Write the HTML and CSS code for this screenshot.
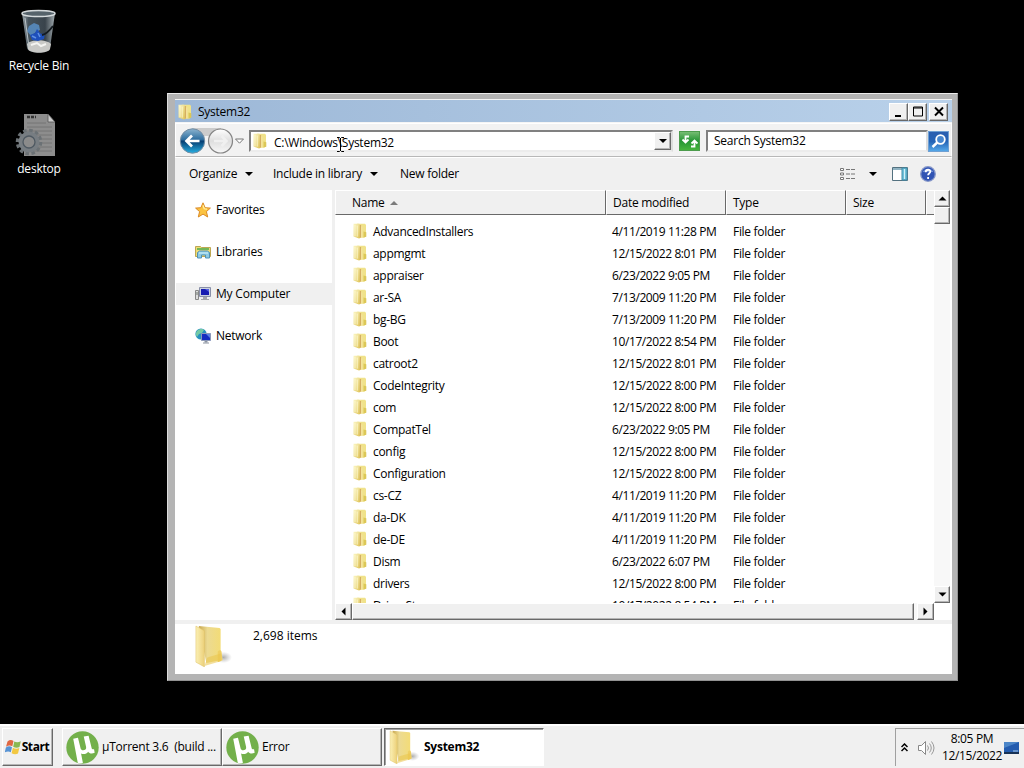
FILE: index.html
```html
<!DOCTYPE html>
<html lang="en">
<head>
  <meta charset="utf-8">
  <meta name="viewport" content="width=device-width, initial-scale=1">
  <title>System32</title>
  <link rel="stylesheet" href="styles.css">
</head>
<body>
  <svg class="sprite" width="0" height="0">
    <defs>
      <linearGradient id="gFolder" x1="0" y1="0" x2="1" y2="1">
        <stop offset="0" stop-color="#fbf6c4"/><stop offset="1" stop-color="#dfc458"/>
      </linearGradient>
      <linearGradient id="gFlap" x1="0" y1="0" x2="1" y2="0">
        <stop offset="0" stop-color="#fbf0b4"/><stop offset="1" stop-color="#ecd07a"/>
      </linearGradient>
      <linearGradient id="gBack" x1="0" y1="0" x2="1" y2="0">
        <stop offset="0" stop-color="#c9a851"/><stop offset=".4" stop-color="#ecda92"/><stop offset="1" stop-color="#f3dc77"/>
      </linearGradient>
      <radialGradient id="gShadow">
        <stop offset="0" stop-color="#777" stop-opacity=".6"/><stop offset="1" stop-color="#999" stop-opacity="0"/>
      </radialGradient>
      <symbol id="folder" viewBox="0 0 16 16">
        <path d="M5 .8h8l1 1v11.6l-2 1.3H5z" fill="#f0e28a"/>
        <path d="M1.500 .8h5.500l1.200 1.300V15L7 15.6 1.500 13.600z" fill="url(#gFolder)"/>
        <path d="M8.400 2v12.600" stroke="#d5ae62" stroke-width="1.300"/>
        <path d="M9.800 3.500v10.800" stroke="#f5e4a4" stroke-width="1"/>
        <path d="M11.500 8.600l2.800.6v4.600l-2.800.8z" fill="#dcc757"/>
        <path d="M3 2v11.200M5.200 2.600v11" stroke="#fffbd8" stroke-width=".8"/>
      </symbol>
      <symbol id="folder-big" viewBox="0 0 40 44">
        <ellipse cx="31" cy="34" rx="9" ry="6" fill="url(#gShadow)"/>
        <path d="M5 1l22 2 1 1v33l-15 3z" fill="url(#gBack)"/>
        <path d="M25 28q3-3 4 0l1 9-5 2z" fill="#efcf62"/>
        <path d="M14 34l14-4v8l-17 5z" fill="#e9c44b" opacity=".55"/>
        <path d="M2 1l9 5v38l-9-5z" fill="url(#gFlap)" stroke="#dcbf63" stroke-width=".5"/>
      </symbol>
      <symbol id="utorrent" viewBox="0 0 32 32">
        <circle cx="16" cy="16" r="15.7" fill="#73b04b"/>
        <path d="M7 7.5l4.6-1 2.6 10.4c.7 2.9 6.1 2 5.3-1.5L17.200 5.400l4.700-.9 3 12.200c.3 1.100 1.200 1.300 2.300.9l.6 3.400c-2.600 1.300-5.200.9-6.300-1-1.400 2.200-4.500 2.900-6.900 1.700L16.400 31c-1.700.5-3.400.2-5-.3z" fill="#fff"/>
      </symbol>
    </defs>
  </svg>

  <main class="desktop">
    <div class="shortcut recycle">
      <svg width="38" height="46" viewBox="0 0 38 46">
        <defs>
          <linearGradient id="gBin" x1="0" x2="1">
            <stop offset="0" stop-color="#9aa4a9"/><stop offset=".2" stop-color="#46535c"/><stop offset=".7" stop-color="#39434b"/><stop offset="1" stop-color="#a3acb0"/>
          </linearGradient>
        </defs>
        <path d="M2 4l5 35c1 6 22 6 23 0l5-35z" fill="url(#gBin)"/>
        <path d="M7 35c4-5 19-5 24 0l-1 5c-2 5-20 5-22 0z" fill="#c9c9c6"/>
        <path d="M9 17l5-3 5 2 1 5-4 2-5 4-4-5z" fill="#5585b4"/>
        <path d="M10 26l5-2 2-4 4 5 4-1-1 6-6 2-6-1z" fill="#1e4fba"/>
        <path d="M12 27l4 2M18 24l2 4" stroke="#5f90e4" stroke-width="1.500"/>
        <path d="M22 26c5-1 8-5 11-9" stroke="#151b20" stroke-width="2" fill="none"/>
        <path d="M11 36l6-2 4 3 5-2" stroke="#f4f4f1" stroke-width="2" fill="none"/>
        <ellipse cx="18.500" cy="4.500" rx="16.500" ry="3" fill="#56636b" stroke="#d5dadc" stroke-width="1.500"/>
        <path d="M5 9l4 29" stroke="#b9c2c7" stroke-width="1"/>
      </svg>
      <span>Recycle Bin</span>
    </div>
    <div class="shortcut">
      <svg width="42" height="46" viewBox="0 0 42 46">
        <path d="M9 2h24l7 8v34H9z" fill="#8d8d8d"/>
        <path d="M33 2v8h7z" fill="#cacaca" stroke="#555" stroke-width=".8"/>
        <path d="M12 5h9" stroke="#333" stroke-width="2.500" stroke-dasharray="3 1"/>
        <path d="M12 11h19M12 15h25M12 19h25M12 23h25M12 27h25M12 31h25M12 35h25M12 39h25" stroke="#747474" stroke-width="1"/>
        <circle cx="14" cy="30" r="11.500" fill="none" stroke="#6b7175" stroke-width="3.500" stroke-dasharray="3.500 2.500"/>
        <circle cx="14" cy="30" r="8" fill="#858789" stroke="#777d82" stroke-width="5"/>
        <circle cx="14" cy="30" r="6" fill="#8b8b8b" stroke="#4f5962" stroke-width="1.300"/>
      </svg>
      <span>desktop</span>
    </div>

    <section class="window">
      <header class="titlebar">
        <svg class="icon"><use href="#folder"/></svg>
        <span class="title">System32</span>
        <button class="caption-btn"><svg width="16" height="15"><path d="M4 12h6" stroke="#000" stroke-width="2"/></svg></button>
        <button class="caption-btn"><svg width="16" height="15"><path d="M3.500 3h9v9h-9zM3.500 4h9" fill="none" stroke="#000"/></svg></button>
        <button class="caption-btn close"><svg width="16" height="15"><path d="M4 3.500l8 8M12 3.500l-8 8" stroke="#000" stroke-width="1.900"/></svg></button>
      </header>

      <div class="addressbar">
        <svg class="nav-buttons" width="68" height="30" viewBox="0 0 68 30">
          <defs>
            <linearGradient id="gNav" x1="0" y1="0" x2="0" y2="1">
              <stop offset="0" stop-color="#8bb3cf"/><stop offset=".46" stop-color="#2a6b9d"/><stop offset=".5" stop-color="#063c70"/><stop offset="1" stop-color="#27b0e3"/>
            </linearGradient>
            <linearGradient id="gFwd" x1="0" y1="0" x2="0" y2="1">
              <stop offset="0" stop-color="#fff"/><stop offset=".5" stop-color="#dedede"/><stop offset="1" stop-color="#f8f8f8"/>
            </linearGradient>
          </defs>
          <path d="M15 2h29v8H15z" fill="#ccc"/>
          <circle cx="15.500" cy="15" r="12.200" fill="url(#gNav)" stroke="#748da3"/>
          <path d="M22.500 15H10M15 9.500L9.500 15l5.500 5.500" fill="none" stroke="#fff" stroke-width="2.700"/>
          <circle cx="43.500" cy="15" r="12" fill="url(#gFwd)" stroke="#858585" stroke-width="1.200"/>
          <path d="M37 15h12M44.500 10l5 5-5 5" fill="none" stroke="#f0f0f0" stroke-width="2.500"/>
          <path d="M58.500 13h8l-4 4.200z" fill="#fff" stroke="#777"/>
        </svg>
        <div class="field path">
          <svg class="icon"><use href="#folder"/></svg>
          <span>C:\Windows\System32</span>
          <button class="drop"><svg width="10" height="6"><path d="M1 1h8L5 5z"/></svg></button>
        </div>
        <button class="refresh">
          <svg width="20" height="19" viewBox="0 0 20 19"><path d="M9 4.500H5.500v5M2.500 7.500l3 3 3-3M11 14.500h3.500v-5M11.500 11.500l3-3 3 3" fill="none" stroke="#fff" stroke-width="1.800"/></svg>
        </button>
        <div class="field search"><span>Search System32</span></div>
        <button class="search-btn">
          <svg width="20" height="19" viewBox="0 0 20 19"><circle cx="11.500" cy="7.500" r="4.300" fill="#4787cf" stroke="#fff" stroke-width="1.800"/><path d="M8.300 10.500L3.500 15" stroke="#fff" stroke-width="2.400"/></svg>
        </button>
        <svg class="ibeam" width="9" height="17"><path d="M1 1.500h2.500l1 1 1-1H8M4.500 2v13M1 15.500h2.500l1-1 1 1H8" fill="none" stroke="#000"/></svg>
      </div>

      <nav class="toolbar">
        <span class="organize">Organize</span><i class="caret"></i>
        <span class="include">Include in library</span><i class="caret"></i>
        <span class="new">New folder</span>
        <svg class="views" width="16" height="14"><path d="M.5 1.500h3v2h-3zM.5 6h3v2h-3zM.5 10.500h3v2h-3z" fill="#fff" stroke="#777"/><path d="M6 2.500h10M6 7h10M6 11.500h10" stroke="#777" stroke-dasharray="4 1"/></svg>
        <i class="caret"></i>
        <svg class="preview" width="16" height="14"><path d="M.5.5h15v13H.5z" fill="#fff" stroke="#53717f"/><path d="M1 2h9" stroke="#90b3c2" stroke-width="2"/><path d="M10 1h5v12h-5z" fill="#6fc2da" stroke="#418ca9"/><path d="M12.500 2v10" stroke="#d2f0f8"/></svg>
        <svg class="help" width="16" height="16"><circle cx="8" cy="8" r="7.300" fill="#3154b4" stroke="#8798c9" stroke-width="1.300"/><path d="M2.500 6a6 5 0 0 1 11 0z" fill="#7190d6"/><path d="M5.700 6.200c0-3.300 4.800-3.100 4.600-.4-.1 1.500-2.200 1.500-2.200 3.500M8.100 11v2" fill="none" stroke="#fff" stroke-width="1.800"/></svg>
      </nav>

      <div class="content">
        <aside class="nav-pane">
          <div class="nav-item">
            <svg width="16" height="16"><path d="M8 .8l2.100 4.900 5.300.4-4 3.500 1.300 5.400L8 12.100 3.300 15l1.300-5.400-4-3.500 5.300-.4z" fill="#fbc341" stroke="#db8a25"/><path d="M8 3.200l1.200 3.600 2.800.3" fill="none" stroke="#fff1a6" stroke-width="1.200"/></svg>
            Favorites
          </div>
          <div class="nav-item">
            <svg width="16" height="16"><path d="M.5 2.500h5l1 1h9v9H.5z" fill="#eedc76" stroke="#bda752"/><path d="M2 5h12" stroke="#73b759" stroke-width="2"/><path d="M2.500 14V8.500l2-1.500h8l2 1.500V14h-4v-3h-4v3z" fill="#8ccae4" stroke="#5392b4"/><path d="M4 9h9" stroke="#d5f4fc"/></svg>
            Libraries
          </div>
          <div class="nav-item selected">
            <svg width="16" height="16"><path d="M.5 4.500h3v9h-3z" fill="#ddd" stroke="#888"/><path d="M2 6v3" stroke="#6b746c"/><path d="M4.500 1.500h11v9h-11z" fill="#cbd1df" stroke="#888fa8"/><path d="M6 3h8v6H6z" fill="#171cb1"/><path d="M10 3h4v3z" fill="#5562df"/><path d="M8 11h4v2h2v1H6v-1h2z" fill="#a5a6ab"/></svg>
            My Computer
          </div>
          <div class="nav-item">
            <svg width="16" height="16"><circle cx="6" cy="6" r="5.600" fill="#2691bf"/><path d="M2 3c3-3 6-2 7-1L7 5 4 6 2 9C.5 7 .5 5 2 3z" fill="#74c9a5"/><path d="M6.500 5.500h9v7h-9z" fill="#162dc0" stroke="#8b98b8"/><path d="M11 6h4v4z" fill="#5d82e3"/><path d="M9.500 13h3v1.500h-3z" fill="#8b93a0"/><path d="M8 15h6" stroke="#8b93a0"/></svg>
            Network
          </div>
        </aside>

        <div class="list-pane">
          <div class="list-view">
            <div class="columns">
              <div class="col">Name <i class="sort"></i></div>
              <div class="col">Date modified</div>
              <div class="col">Type</div>
              <div class="col">Size</div>
              <div class="col"></div>
            </div>
            <div class="rows">
              <div class="row"><svg class="icon"><use href="#folder"/></svg><span>AdvancedInstallers</span><span class="date">4/11/2019 11:28 PM</span><span>File folder</span></div>
              <div class="row"><svg class="icon"><use href="#folder"/></svg><span>appmgmt</span><span class="date">12/15/2022 8:01 PM</span><span>File folder</span></div>
              <div class="row"><svg class="icon"><use href="#folder"/></svg><span>appraiser</span><span class="date">6/23/2022 9:05 PM</span><span>File folder</span></div>
              <div class="row"><svg class="icon"><use href="#folder"/></svg><span>ar-SA</span><span class="date">7/13/2009 11:20 PM</span><span>File folder</span></div>
              <div class="row"><svg class="icon"><use href="#folder"/></svg><span>bg-BG</span><span class="date">7/13/2009 11:20 PM</span><span>File folder</span></div>
              <div class="row"><svg class="icon"><use href="#folder"/></svg><span>Boot</span><span class="date">10/17/2022 8:54 PM</span><span>File folder</span></div>
              <div class="row"><svg class="icon"><use href="#folder"/></svg><span>catroot2</span><span class="date">12/15/2022 8:01 PM</span><span>File folder</span></div>
              <div class="row"><svg class="icon"><use href="#folder"/></svg><span>CodeIntegrity</span><span class="date">12/15/2022 8:00 PM</span><span>File folder</span></div>
              <div class="row"><svg class="icon"><use href="#folder"/></svg><span>com</span><span class="date">12/15/2022 8:00 PM</span><span>File folder</span></div>
              <div class="row"><svg class="icon"><use href="#folder"/></svg><span>CompatTel</span><span class="date">6/23/2022 9:05 PM</span><span>File folder</span></div>
              <div class="row"><svg class="icon"><use href="#folder"/></svg><span>config</span><span class="date">12/15/2022 8:00 PM</span><span>File folder</span></div>
              <div class="row"><svg class="icon"><use href="#folder"/></svg><span>Configuration</span><span class="date">12/15/2022 8:00 PM</span><span>File folder</span></div>
              <div class="row"><svg class="icon"><use href="#folder"/></svg><span>cs-CZ</span><span class="date">4/11/2019 11:20 PM</span><span>File folder</span></div>
              <div class="row"><svg class="icon"><use href="#folder"/></svg><span>da-DK</span><span class="date">4/11/2019 11:20 PM</span><span>File folder</span></div>
              <div class="row"><svg class="icon"><use href="#folder"/></svg><span>de-DE</span><span class="date">4/11/2019 11:20 PM</span><span>File folder</span></div>
              <div class="row"><svg class="icon"><use href="#folder"/></svg><span>Dism</span><span class="date">6/23/2022 6:07 PM</span><span>File folder</span></div>
              <div class="row"><svg class="icon"><use href="#folder"/></svg><span>drivers</span><span class="date">12/15/2022 8:00 PM</span><span>File folder</span></div>
              <div class="row"><svg class="icon"><use href="#folder"/></svg><span>DriverStore</span><span class="date">10/17/2022 8:54 PM</span><span>File folder</span></div>
            </div>
          </div>
          <div class="vscroll">
            <button><svg width="9" height="5"><path d="M.5 4.500h8l-4-4z"/></svg></button>
            <div class="thumb"></div>
            <div class="track"></div>
            <button><svg width="9" height="5"><path d="M.5.5h8l-4 4z"/></svg></button>
          </div>
          <div class="hscroll">
            <button><svg width="5" height="9"><path d="M4.500.5v8l-4-4z"/></svg></button>
            <div class="thumb"></div>
            <div class="track"></div>
            <button><svg width="5" height="9"><path d="M.5.5v8l4-4z"/></svg></button>
          </div>
        </div>
      </div>

      <footer class="details">
        <svg width="38" height="42"><use href="#folder-big"/></svg>
        <span>2,698 items</span>
      </footer>
    </section>
  </main>

  <div class="taskbar">
    <button class="start">
      <svg width="17" height="16" viewBox="0 0 17 16"><path d="M2.500 2.500Q5.500 0 8.500 2L7.300 7.300Q4.500 5.500 1 7.800z" fill="#df6742"/><path d="M9.300 2.500q3 1.700 6.500-.3L14.500 8q-3.200 1.500-6.300-.3z" fill="#8ab852"/><path d="M.9 8.500Q4 6.300 7 8.200L5.800 13.300Q3 11.600-.3 13.500z" fill="#5793d4"/><path d="M7.900 8.700q3.200 1.700 6.400.3L13 14.600q-3.200 1.500-6.400-.4z" fill="#f2c842"/></svg>
      Start
    </button>
    <button class="task"><svg width="33" height="33"><use href="#utorrent"/></svg>µTorrent 3.6 &nbsp;(build ...</button>
    <button class="task"><svg width="33" height="33"><use href="#utorrent"/></svg>Error</button>
    <button class="task active"><svg width="32" height="34"><use href="#folder-big"/></svg>System32</button>
    <div class="tray">
      <svg width="7" height="9"><path d="M.5 4L3.500 1l3 3M.5 8l3-3 3 3" fill="none" stroke="#000" stroke-width="1.500"/></svg>
      <svg class="volume" width="17" height="16"><path d="M.5 5.500h3l4-4v13l-4-4h-3z" fill="#fff" stroke="#888"/><path d="M9.500 5.500q2 2.500 0 5M11.500 3.500q3.500 4.500 0 9M13.500 1.500q5 6.500 0 13" fill="none" stroke="#999"/></svg>
      <div class="clock"><span>8:05 PM</span><span>12/15/2022</span></div>
      <svg class="show-desktop" width="16" height="14"><path d="M0 1h15v11H0z" fill="#245caf"/><path d="M0 1h15L0 7z" fill="#4c86c8"/><path d="M0 12h15" stroke="#183256" stroke-width="2"/><path d="M9 10h5" stroke="#a9cae9"/></svg>
    </div>
  </div>
</body>
</html>
```
FILE: styles.css
```css
* {
  box-sizing: border-box;
}

body {
  margin: 0;
  width: 1024px;
  height: 768px;
  display: flex;
  flex-direction: column;
  overflow: hidden;
  background: #000;
  color: #000;
  font-family: "Open Sans", "Noto Sans", sans-serif;
  font-size: 12px;
  line-height: 16px;
  letter-spacing: -0.25px;
  white-space: nowrap;
}

button {
  display: flex;
  align-items: center;
  justify-content: center;
  flex-shrink: 0;
  margin: 0;
  padding: 0;
  border: 1px solid;
  border-color: #fff #696969 #696969 #fff;
  box-shadow: inset -1px -1px #b5b5b5;
  background: #f0f0f0;
  color: #000;
  font: inherit;
  letter-spacing: inherit;
}

svg {
  display: block;
  flex-shrink: 0;
}

.sprite {
  position: absolute;
}

.icon {
  width: 16px;
  height: 16px;
}

/* Desktop */
.desktop {
  position: relative;
  height: 724px;
}

.shortcut {
  width: 78px;
  height: 103px;
  padding-top: 9px;
  display: flex;
  flex-direction: column;
  align-items: center;
  gap: 3px;
  color: #fff;
  letter-spacing: -0.2px;
}

.shortcut:not(.recycle) svg {
  margin-right: 7px;
}

/* Explorer window */
.window {
  position: absolute;
  left: 167px;
  top: 93px;
  width: 791px;
  height: 588px;
  padding: 5px 5px 6px 7px;
  display: flex;
  flex-direction: column;
  background: #b4b4b4;
  border: 1px solid;
  border-color: #ececec #929292 #929292 #dcdcdc;
}

.titlebar {
  height: 24px;
  flex-shrink: 0;
  display: flex;
  align-items: center;
  padding: 1px 4px 0 2px;
  border: 1px solid #f5f5f5;
  border-width: 1px 0 1px 0;
  background: linear-gradient(90deg, #9db8d7, #b9d1ea);
}

.titlebar .title {
  margin-left: 5px;
  flex: 1;
}

.caption-btn {
  width: 19px;
  height: 18px;
}

.caption-btn.close {
  margin-left: 2px;
}

.addressbar {
  position: relative;
  height: 34px;
  flex-shrink: 0;
  display: flex;
  align-items: center;
  padding-top: 2px;
  background: #f2f2f2;
  border: 1px solid #fff;
  border-bottom-color: #b8b8b8;
}

.nav-buttons {
  margin: 0 4px 0 1px;
}

.field {
  height: 22px;
  display: flex;
  align-items: center;
  background: #fff;
  border: 2px solid;
  border-color: #808080 #ddd #ececec #808080;
}

.path {
  width: 424px;
  padding-left: 1px;
}

.path span {
  margin-left: 6px;
  padding-top: 3px;
  flex: 1;
}

.drop {
  width: 17px;
  height: 18px;
}

.refresh {
  width: 21px;
  height: 20px;
  margin: 0 6px;
  border: 1px solid #4c9c4c;
  background: linear-gradient(#76bd73, #259534 50%, #45b43c);
  box-shadow: none;
}

.search {
  width: 222px;
  padding-left: 6px;
}

.search-btn {
  width: 21px;
  height: 21px;
  border: 1px solid #6fa0d3;
  background: linear-gradient(#2a5eaf, #2564b6 50%, #54a7e8);
  box-shadow: none;
}

/* text cursor over the path */
.ibeam {
  position: absolute;
  left: 160px;
  top: 12px;
}

.toolbar {
  height: 33px;
  flex-shrink: 0;
  display: flex;
  align-items: center;
  padding: 0 16px 0 14px;
  background: #f0f0f0;
  border-top: 1px solid #fff;
}

.caret {
  width: 0;
  height: 0;
  margin-left: 8px;
  border: 4px solid transparent;
  border-top-color: #000;
  border-bottom: 0;
}

.organize {
  width: 48px;
}

.include {
  width: 89px;
  margin-left: 20px;
}

.new {
  margin-left: 22px;
  flex: 1;
}

.views {
  margin-right: 5px;
}

.preview {
  margin: 0 12px 0 15px;
}

.content {
  height: 430px;
  flex-shrink: 0;
  display: flex;
  background: #fff;
}

.nav-pane {
  width: 157px;
  padding: 9px 0 0 1px;
  display: flex;
  flex-direction: column;
  gap: 20px;
}

.nav-item {
  height: 22px;
  display: flex;
  align-items: center;
  gap: 5px;
  padding-left: 19px;
}

.nav-item.selected {
  background: #f0f0f0;
  letter-spacing: -0.2px;
}

.list-pane {
  width: 618px;
  border-left: 3px solid #f0f0f0;
  display: grid;
  grid-template-columns: 599px 16px;
  grid-template-rows: 413px 17px;
}

.list-view {
  overflow: hidden;
}

.columns {
  height: 25px;
  display: grid;
  grid-template-columns: 271px 120px 120px 80px 8px;
  background: #f0f0f0;
}

.col {
  display: flex;
  align-items: center;
  padding-left: 6px;
  border: 1px solid;
  border-color: #fff #696969 #696969 #fff;
}

.col:first-child {
  padding-left: 16px;
}

.col:last-child {
  border-right: 0;
}

.sort {
  margin-left: 5px;
  border: 4px solid transparent;
  border-bottom-color: #7b7b7b;
  border-top: 0;
}

.rows {
  padding-top: 6px;
}

.row {
  height: 22px;
  display: grid;
  grid-template-columns: 21px 239px 121px 120px;
  align-items: center;
  padding-left: 17px;
  letter-spacing: -0.3px;
}

.row .icon {
  margin-top: -2px;
}

.date {
  letter-spacing: -0.4px;
}

.vscroll {
  display: flex;
  flex-direction: column;
}

.vscroll button {
  width: 16px;
  height: 17px;
}

.vscroll .thumb {
  height: 17px;
}

.hscroll {
  width: 599px;
  display: flex;
}

.hscroll button {
  width: 17px;
  height: 17px;
}

.hscroll .thumb {
  width: 562px;
}

.thumb {
  background: #f0f0f0;
  border: 1px solid;
  border-color: #fff #696969 #696969 #fff;
  box-shadow: inset -1px -1px #b5b5b5;
}

.track {
  flex: 1;
  background: #f8f8f8;
}

.details {
  height: 54px;
  display: flex;
  padding: 1px 0 0 19px;
  background: #fff;
  border-top: 4px solid #f0f0f0;
}

.details span {
  margin: 3px 0 0 21px;
  letter-spacing: 0;
}

/* Taskbar */
.taskbar {
  height: 44px;
  display: flex;
  align-items: flex-start;
  padding: 2px 0 0 2px;
  background: #f0f0f0;
  border-top: 2px solid #fff;
}

.start {
  width: 51px;
  height: 38px;
  margin-right: 9px;
  padding-right: 1px;
  font-weight: 700;
  letter-spacing: -0.4px;
}

.task {
  width: 160px;
  height: 38px;
  justify-content: flex-start;
  gap: 3px;
  padding-left: 3px;
}

.task.active {
  margin-left: 2px;
  gap: 4px;
  border-color: #696969 #fff #fff #696969;
  box-shadow: inset 1px 1px #a0a0a0;
  background: #fff;
  font-weight: 700;
}

.tray {
  width: 129px;
  height: 38px;
  margin-left: auto;
  display: flex;
  align-items: center;
  padding-left: 5px;
  border-left: 1px solid #a0a0a0;
  border-top: 1px solid #a0a0a0;
}

.volume {
  margin: 0 7px 0 10px;
}

.clock {
  width: 60px;
  margin-top: -2px;
  display: flex;
  flex-direction: column;
  align-items: center;
  line-height: 17px;
  letter-spacing: -0.35px;
}

.show-desktop {
  margin-left: 2px;
}
```
